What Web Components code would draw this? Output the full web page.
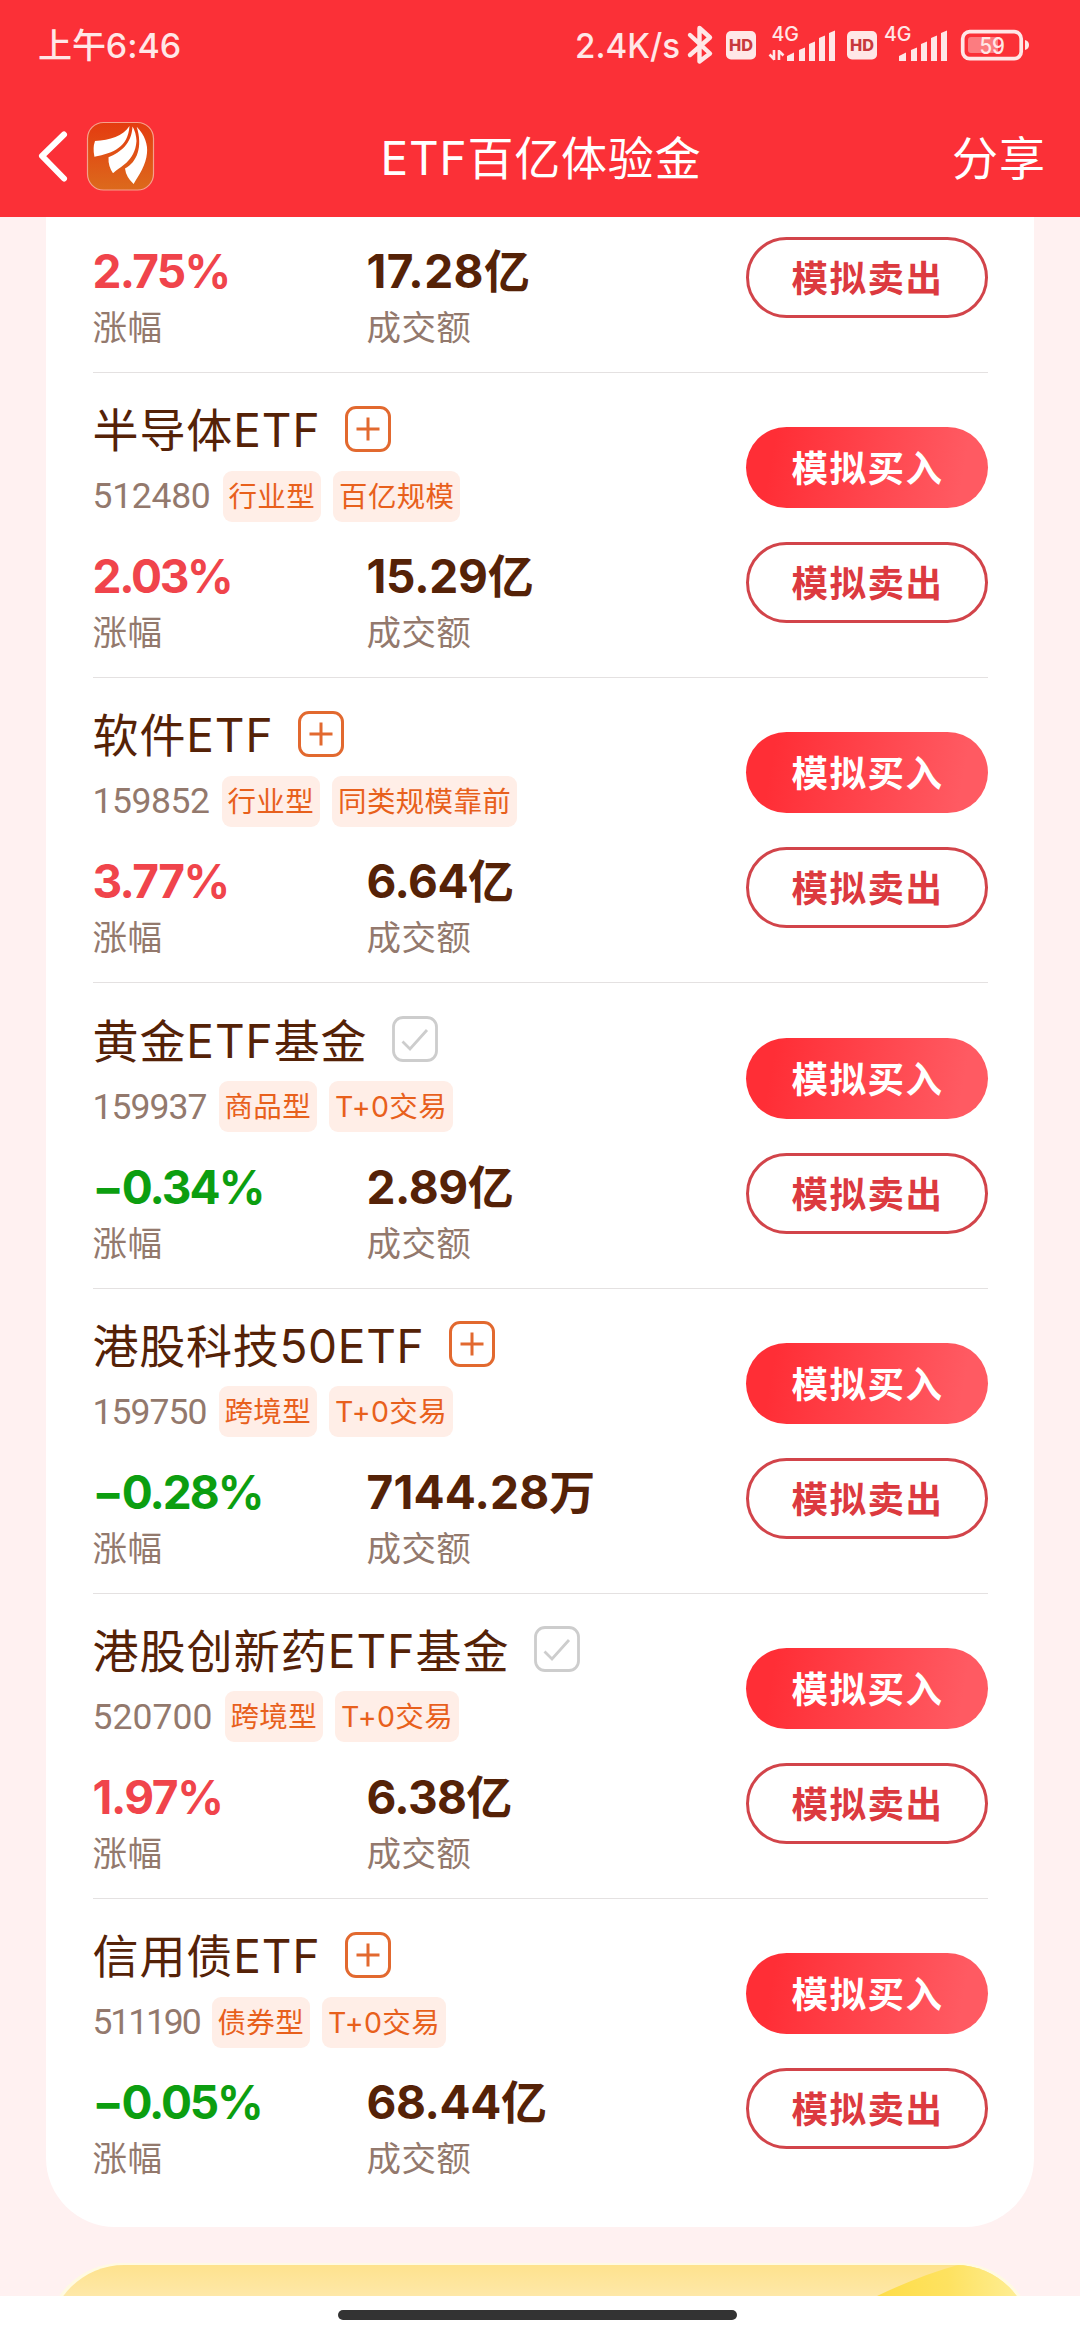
<!DOCTYPE html>
<html lang="zh-CN">
<head>
<meta charset="utf-8">
<title>ETF百亿体验金</title>
<style>
html,body{margin:0;padding:0}
body{width:1080px;height:2340px;overflow:hidden;background:#fff;font-family:Inter,"Noto Sans CJK SC",sans-serif}
</style>
</head>
<body>
<etf-app></etf-app>
<script>
const define = (name, html, setup) => {
  const t = document.createElement('template');
  t.innerHTML = html;
  customElements.define(name, class extends HTMLElement {
    connectedCallback() {
      if (this.shadowRoot) return;
      this.attachShadow({mode: 'open'}).appendChild(t.content.cloneNode(true));
      if (setup) setup(this, this.shadowRoot);
    }
  });
};

/* Text that is tracked to a given advance width (attribute "w"). */
define('fit-text', `<style>:host{display:inline-block;white-space:nowrap;flex:none}span{display:inline-block}</style><span><slot></slot></span>`,
  (host, root) => {
    const w = parseFloat(host.getAttribute('w'));
    if (!w) return;
    const s = root.querySelector('span');
    const n = [...host.textContent].length;
    s.style.letterSpacing = '0px';
    s.style.letterSpacing = ((w - s.getBoundingClientRect().width) / n) + 'px';
    host.style.width = w + 'px';
  });

define('status-bar', `<style>
:host{display:flex;height:92px;align-items:center;justify-content:space-between;color:#ffe7e7;padding-left:38px}
.time{font:500 34px/40px Inter,"Noto Sans CJK SC",sans-serif}
svg{display:block;flex:none}
text{font-family:Inter,"Noto Sans CJK SC",sans-serif}
</style>
<fit-text class="time" w="143">上午6:46</fit-text>
<svg width="510" height="92" viewBox="570 0 510 92" fill="#ffe7e7">
<text x="575" y="58" font-size="34" font-weight="500" textLength="105" lengthAdjust="spacingAndGlyphs">2.4K/s</text>
<path d="M690 35L710 53.500L699.500 61.500V28L710 37.500L690 55" fill="none" stroke="#ffe7e7" stroke-width="4.400" stroke-linejoin="round" stroke-linecap="round"/>
<rect x="726" y="31" width="30" height="28.500" rx="5"/><text x="729" y="51" font-size="16" font-weight="800" fill="#c8383c" textLength="24" lengthAdjust="spacingAndGlyphs">HD</text>
<text x="771.500" y="41" font-size="19.500" font-weight="500" textLength="27.500" lengthAdjust="spacingAndGlyphs">4G</text>
<path d="M774 50V60M774.500 59.500L769.500 54.500M779 60V50M779 51L783.500 55.500" stroke="#ffe7e7" stroke-width="2.600" fill="none"/>
<path d="M787 56l7-3.500V61h-7zM799 50l6-2.500V61h-6zM809 44l6-2.500V61h-6zM819 38l6-2.500V61h-6zM829 33l6-2.500V61h-6z"/>
<rect x="847" y="31" width="30" height="28.500" rx="5"/><text x="850" y="51" font-size="16" font-weight="800" fill="#c8383c" textLength="24" lengthAdjust="spacingAndGlyphs">HD</text>
<text x="884" y="41" font-size="19.500" font-weight="500" textLength="27.500" lengthAdjust="spacingAndGlyphs">4G</text>
<path transform="translate(112)" d="M787 56l7-3.500V61h-7zM799 50l6-2.500V61h-6zM809 44l6-2.500V61h-6zM819 38l6-2.500V61h-6zM829 33l6-2.500V61h-6z"/>
<rect x="962.700" y="31.700" width="58.500" height="27" rx="7" fill="none" stroke="#ffe7e7" stroke-width="3.700"/>
<path d="M971 37H998V53H971Q968 53 968 50V40Q968 37 971 37Z" fill="#fc7c80"/>
<path d="M1025 40q4 1 4 5t-4 5z"/>
<text x="979.500" y="53.500" font-size="23" font-weight="500" textLength="25.500" lengthAdjust="spacingAndGlyphs">59</text>
</svg>`);

define('nav-bar', `<style>
:host{display:grid;grid-template-columns:300px 1fr 300px;align-items:center;height:125px;color:#fff}
.l{display:flex;height:125px}.c{display:flex;justify-content:center;padding:6px 0 0 2px}.r{display:flex;justify-content:flex-end;padding:6px 34px 0 0}
fit-text{font:400 46px/66px Inter,"Noto Sans CJK SC",sans-serif}
svg{display:block}
</style>
<div class="l"><svg width="200" height="125" viewBox="0 92 200 125">
<defs><linearGradient id="g" x2="0" y2="1"><stop stop-color="#e43b10"/><stop offset="1" stop-color="#dc6a1c"/></linearGradient></defs>
<path d="M64 134.500L42 156L64 178.500" fill="none" stroke="#fff" stroke-width="6" stroke-linecap="round" stroke-linejoin="round"/>
<rect x="87.500" y="122.500" width="66" height="67.500" rx="16" fill="url(#g)" stroke="#f6a08c" stroke-width="1.200"/>
<g fill="#fff"><path d="M129.500 126C123 136 110 140 95 141Q92.500 148 94.400 156.700C114 153 128 147 129.500 126Z"/>
<path d="M132.500 126.500C131.500 144 121 152 108.500 157.300Q108 166 113 173.300C119 167 135 162 136.500 141Q136 132 132.500 126.500Z"/>
<path d="M136.700 126.700C145 135 148 145 147 153C146 165 139 175 133.600 184Q126 177 125 168.500C137 162 143 147 136.700 126.700Z"/></g>
</svg></div>
<div class="c"><fit-text w="321">ETF百亿体验金</fit-text></div>
<div class="r"><fit-text w="94">分享</fit-text></div>`);

define('watch-icon', `<style>:host{display:block;width:46px;height:46px;flex:none;margin-top:-3px}svg{display:block}.chk{display:none}
:host([checked]) .chk{display:block}:host([checked]) .add{display:none}</style>
<svg class="add" width="46" height="46" fill="none" stroke="#e2692f" stroke-width="3"><rect x="1.500" y="1.500" width="43" height="43" rx="9.500"/><path d="M11.500 23H34.500M23 11.500V34.500"/></svg>
<svg class="chk" width="46" height="46" fill="none" stroke="#cdcdcd" stroke-width="2.800"><rect x="1.500" y="1.500" width="43" height="43" rx="9.500"/><path d="M10.500 25.500L18 33L35 14"/></svg>`);

define('fund-tag', `<style>:host{display:flex;align-items:center;height:51px;padding:0 6px;border-radius:9px;background:#ffeee7;color:#e8601c;font:400 28.500px/51px Inter,"Noto Sans CJK SC",sans-serif;letter-spacing:.35px;white-space:nowrap;flex:none}</style><slot></slot>`);

define('trade-button', `<style>:host{display:flex;box-sizing:border-box;width:242px;height:81px;border-radius:41px;align-items:center;justify-content:center;font:700 36.500px/54px "Noto Sans CJK SC",sans-serif;letter-spacing:1.500px;padding:0 0 1px 2px;background:linear-gradient(100deg,#ff2e36 12%,#ff5a62 88%);color:#fff}
:host([sell]){background:#fff;border:3px solid #d2444a;color:#dc3a3f}</style><slot></slot>`);

define('fund-stat', `<style>:host{display:flex;flex-direction:column}
.v{height:53px;font:700 46px/54px Inter,"Noto Sans CJK SC",sans-serif;color:var(--c,#552207)}
.l{height:59px;font:400 34.500px/56px "Noto Sans CJK SC",sans-serif;letter-spacing:.4px;color:#93796d}</style>
<div class="v"><slot></slot></div><div class="l"><slot name="label"></slot></div>`);

define('fund-row', `<style>
:host{display:flex;box-sizing:border-box;height:305.200px;justify-content:space-between;align-items:flex-end;border-bottom:1.500px solid #e4e1e1;padding-bottom:16px}
:host([partial]){height:156px}
:host([last]){border-color:transparent}
.title{display:flex;align-items:center;gap:24px;height:66px;color:#552207}
.title fit-text{font:400 46px/66px Inter,"Noto Sans CJK SC",sans-serif}
.meta{display:flex;align-items:center;gap:12px;height:66px;margin-bottom:20px}
.code{font:400 35.500px/50px Roboto,sans-serif;color:#93796d}
.stats{display:grid;grid-template-columns:274px 300px}
.acts{display:flex;flex-direction:column;gap:34px;padding-bottom:38px}
:host([partial]) .title,:host([partial]) .meta,:host([partial]) .buy{display:none}
</style>
<div class="main"><div class="title"></div><div class="meta"></div><div class="stats"></div></div>
<div class="acts"><trade-button class="buy">模拟买入</trade-button><trade-button sell>模拟卖出</trade-button></div>`,
(host, root) => {
  const d = host.data;
  const down = d.chg[0] === '−';
  if (d.name) {
    root.querySelector('.title').innerHTML = `<fit-text w="${d.nameW}">${d.name}</fit-text><watch-icon ${d.held ? 'checked' : ''}></watch-icon>`;
    root.querySelector('.meta').innerHTML = `<fit-text class="code" w="${d.codeW}">${d.code}</fit-text>` +
      d.tags.map(t => `<fund-tag>${t[0] === 'T' ? `<fit-text w="112">${t}</fit-text>` : t}</fund-tag>`).join('');
  }
  root.querySelector('.stats').innerHTML =
    `<fund-stat style="--c:${down ? '#0c9e10' : '#f0444b'}"><fit-text w="${d.chgW}">${d.chg}</fit-text><span slot="label">涨幅</span></fund-stat>` +
    `<fund-stat><fit-text w="${d.volW}">${d.vol}</fit-text><span slot="label">成交额</span></fund-stat>`;
});

const funds = [
  {chg: '2.75%', chgW: 137, vol: '17.28亿', volW: 164},
  {name: '半导体ETF', nameW: 228, code: '512480', codeW: 118, tags: ['行业型', '百亿规模'], chg: '2.03%', chgW: 139, vol: '15.29亿', volW: 167},
  {name: '软件ETF', nameW: 181, code: '159852', codeW: 117, tags: ['行业型', '同类规模靠前'], chg: '3.77%', chgW: 136, vol: '6.64亿', volW: 147},
  {name: '黄金ETF基金', nameW: 275, held: 1, code: '159937', codeW: 114, tags: ['商品型', 'T+0交易'], chg: '−0.34%', chgW: 171, vol: '2.89亿', volW: 147},
  {name: '港股科技50ETF', nameW: 332, code: '159750', codeW: 114, tags: ['跨境型', 'T+0交易'], chg: '−0.28%', chgW: 170, vol: '7144.28万', volW: 229},
  {name: '港股创新药ETF基金', nameW: 417, held: 1, code: '520700', codeW: 120, tags: ['跨境型', 'T+0交易'], chg: '1.97%', chgW: 130, vol: '6.38亿', volW: 145},
  {name: '信用债ETF', nameW: 228, code: '511190', codeW: 107, tags: ['债券型', 'T+0交易'], chg: '−0.05%', chgW: 169, vol: '68.44亿', volW: 180}
];

define('fund-list', `<style>:host{display:block;box-sizing:border-box;height:2010px;margin:0 46px;padding:0 46.500px;background:#fff;border-radius:0 0 69px 69px}</style>`,
(host, root) => funds.forEach((f, i) => {
  const r = document.createElement('fund-row');
  r.data = f;
  if (!f.name) r.setAttribute('partial', '');
  if (i === funds.length - 1) r.setAttribute('last', '');
  root.appendChild(r);
}));

define('promo-card', `<style>:host{display:block;margin:36px 46px 0;height:33px;overflow:hidden}svg{display:block}</style>
<svg width="988" height="33"><defs>
<linearGradient id="a" x2="0" y2="1"><stop stop-color="#fee28c"/><stop offset="1" stop-color="#fee8a8"/></linearGradient>
<linearGradient id="b"><stop stop-color="#fedd48"/><stop offset=".45" stop-color="#fee260"/><stop offset="1" stop-color="#fef0a0"/></linearGradient>
<clipPath id="k"><rect x="3" y="2" width="982" height="200" rx="75"/></clipPath></defs>
<rect width="988" height="200" rx="76" fill="#fffae2"/>
<g clip-path="url(#k)"><rect width="988" height="33" fill="url(#a)"/><path d="M831 33Q875 12 912 2H988V33Z" fill="url(#b)"/></g></svg>`);

define('home-indicator', `<style>:host{display:flex;height:44px;background:#fff;justify-content:center}i{width:399px;height:10px;border-radius:5px;background:#333;margin-top:14px;margin-left:-6px}</style><i></i>`);

define('etf-app', `<style>
:host{display:flex;flex-direction:column;width:1080px;height:2340px;overflow:hidden}
header{height:217px;background:#fb3037;flex:none}
main{height:2079px;background:#fff1f1;flex:none;overflow:hidden}
</style>
<header><status-bar></status-bar><nav-bar></nav-bar></header>
<main><fund-list></fund-list><promo-card></promo-card></main>
<home-indicator></home-indicator>`);
</script>
</body>
</html>
